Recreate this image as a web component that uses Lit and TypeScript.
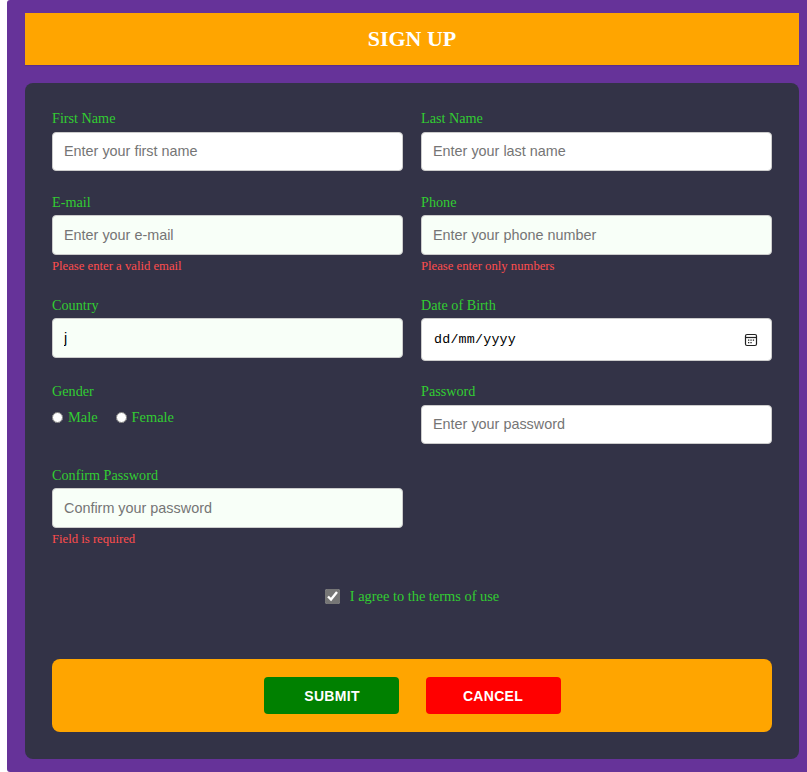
import { LitElement, html, css } from "lit";
import { customElement } from "lit/decorators.js";

@customElement("app-root")
export class AppRoot extends LitElement {
  static styles = css`
    :host { display: block; width: 807px; height: 772px; overflow: hidden; background: #fff; font-family: "Liberation Serif", serif; }
    * { box-sizing: border-box; }
    .shell { width: 810px; height: 772px; margin-left: 7px; padding: 13px 18px; background: #663399; border-radius: 3px; }
    .title { margin: 0 0 18px; width: 774px; height: 52px; background: #ffa500; color: #fff; font-size: 22px; font-weight: 700; line-height: 52px; text-align: center; box-shadow: 0 1px 1px rgba(0,0,0,.1); }
    .card { width: 774px; height: 676px; padding: 28px 27px 0; background: #333347; border-radius: 8px; }
    .grid { display: grid; grid-template-columns: 351px 351px; column-gap: 18px; row-gap: 23px; align-items: start; }
    .field { display: flex; flex-direction: column; }
    label, .lbl { color: #32cd32; font-size: 14.2px; line-height: 14px; }
    .lbl { margin-bottom: 7px; }
    .lbl.tight { margin-top: 1px; margin-bottom: 6px; }
    input.text { display: block; width: 100%; height: 40px; padding: 0 11px; border: 1px solid #ccc; border-radius: 4px; background: #f8fff8; color: #000; font-family: "Liberation Sans", sans-serif; font-size: 14.4px; outline: none; }
    input.text::placeholder { color: #757575; }
    input.plain { background: #fff; height: 39px; padding-bottom: 1px; }
    .datebox { display: flex; align-items: center; justify-content: space-between; height: 43px; padding: 0 13px 0 12px; background: #fff; border: 1px solid #ccc; border-radius: 4px; color: #000; font-family: "Liberation Mono", monospace; font-size: 13.33px; letter-spacing: .2px; }
    .datebox svg { display: block; }
    .err { margin-top: 4px; color: #ff4d4d; font-size: 12.7px; line-height: 15px; }
    .radios { display: flex; align-items: center; height: 16px; margin-top: 4px; color: #32cd32; }
    .radios input { width: 11px; height: 11px; margin: 0 5px 0 0; accent-color: #fff; }
    .radios label { display: flex; align-items: center; margin-right: 18px; font-size: 14.4px; line-height: 16px; }
    .agree { display: flex; justify-content: center; align-items: center; gap: 10px; height: 16px; margin-top: 41px; }
    .agree label { font-size: 14.4px; line-height: 16px; }
    .agree input { width: 15px; height: 15px; margin: 0; accent-color: #767676; }
    .actions { display: flex; justify-content: center; align-items: center; gap: 27px; height: 73px; margin-top: 55px; background: #ffa500; border-radius: 8px; }
    button { width: 135px; height: 37px; border: none; border-radius: 4px; color: #fff; font-family: "Liberation Sans", sans-serif; font-size: 14px; font-weight: 700; letter-spacing: .3px; }
    .ok { background: #008000; padding-left: 8px; }
    .no { background: #ff0000; }
  `;

  render() {
    const cal = html`<svg width="14" height="14" viewBox="0 0 14 14" fill="none">
      <rect x="1.5" y="1.5" width="11" height="11" rx="1.5" stroke="#222" stroke-width="1.2"></rect>
      <path d="M1.5 4.5h11" stroke="#222" stroke-width="1.2"></path>
      <path d="M4 6.5h1.3v1.3H4zM6.4 6.5h1.3v1.3H6.4zM8.8 6.5h1.3v1.3H8.8zM4 9h1.3v1.3H4zM6.4 9h1.3v1.3H6.4z" fill="#222"></path>
    </svg>`;
    return html`<div class="shell">
      <h1 class="title">SIGN UP</h1>
      <form class="card">
        <div class="grid">
          <div class="field"><span class="lbl">First Name</span><input class="text plain" placeholder="Enter your first name" /></div>
          <div class="field"><span class="lbl">Last Name</span><input class="text plain" placeholder="Enter your last name" /></div>
          <div class="field"><span class="lbl tight">E-mail</span><input class="text" placeholder="Enter your e-mail" /><span class="err">Please enter a valid email</span></div>
          <div class="field"><span class="lbl tight">Phone</span><input class="text" placeholder="Enter your phone number" /><span class="err">Please enter only numbers</span></div>
          <div class="field"><span class="lbl tight">Country</span><input class="text" value="j" /></div>
          <div class="field"><span class="lbl tight">Date of Birth</span><div class="datebox"><span>dd/mm/yyyy</span>${cal}</div></div>
          <div class="field"><span class="lbl">Gender</span>
            <div class="radios">
              <label><input type="radio" name="g" />Male</label>
              <label><input type="radio" name="g" />Female</label>
            </div>
          </div>
          <div class="field"><span class="lbl">Password</span><input class="text plain" placeholder="Enter your password" /></div>
          <div class="field"><span class="lbl tight">Confirm Password</span><input class="text" placeholder="Confirm your password" /><span class="err">Field is required</span></div>
        </div>
        <div class="agree"><input type="checkbox" checked /><label>I agree to the terms of use</label></div>
        <div class="actions">
          <button type="button" class="ok">SUBMIT</button>
          <button type="button" class="no">CANCEL</button>
        </div>
      </form>
    </div>`;
  }
}
